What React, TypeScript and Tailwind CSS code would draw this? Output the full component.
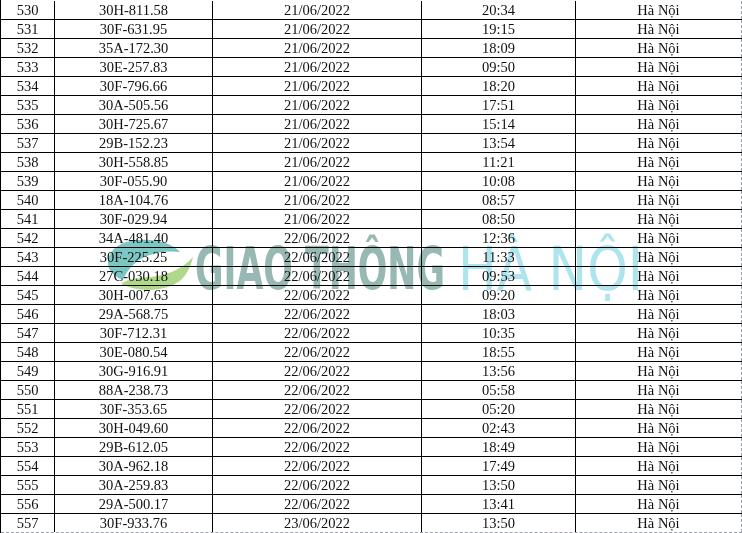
import React from "react";

const rows: [string, string, string, string][] = [
  ["530", "30H-811.58", "21/06/2022", "20:34"],
  ["531", "30F-631.95", "21/06/2022", "19:15"],
  ["532", "35A-172.30", "21/06/2022", "18:09"],
  ["533", "30E-257.83", "21/06/2022", "09:50"],
  ["534", "30F-796.66", "21/06/2022", "18:20"],
  ["535", "30A-505.56", "21/06/2022", "17:51"],
  ["536", "30H-725.67", "21/06/2022", "15:14"],
  ["537", "29B-152.23", "21/06/2022", "13:54"],
  ["538", "30H-558.85", "21/06/2022", "11:21"],
  ["539", "30F-055.90", "21/06/2022", "10:08"],
  ["540", "18A-104.76", "21/06/2022", "08:57"],
  ["541", "30F-029.94", "21/06/2022", "08:50"],
  ["542", "34A-481.40", "22/06/2022", "12:36"],
  ["543", "30F-225.25", "22/06/2022", "11:33"],
  ["544", "27C-030.18", "22/06/2022", "09:53"],
  ["545", "30H-007.63", "22/06/2022", "09:20"],
  ["546", "29A-568.75", "22/06/2022", "18:03"],
  ["547", "30F-712.31", "22/06/2022", "10:35"],
  ["548", "30E-080.54", "22/06/2022", "18:55"],
  ["549", "30G-916.91", "22/06/2022", "13:56"],
  ["550", "88A-238.73", "22/06/2022", "05:58"],
  ["551", "30F-353.65", "22/06/2022", "05:20"],
  ["552", "30H-049.60", "22/06/2022", "02:43"],
  ["553", "29B-612.05", "22/06/2022", "18:49"],
  ["554", "30A-962.18", "22/06/2022", "17:49"],
  ["555", "30A-259.83", "22/06/2022", "13:50"],
  ["556", "29A-500.17", "22/06/2022", "13:41"],
  ["557", "30F-933.76", "23/06/2022", "13:50"],
];

function Watermark() {
  return (
    <svg
      className="absolute left-0 top-0 pointer-events-none mix-blend-multiply"
      width="742"
      height="533"
      viewBox="0 0 742 533"
    >
      <path
        d="M108,263 C108,246 127,238 150,240 C165,241 176,247 180,252 C166,250 151,253 141,259 C131,265 126,273 123,280 C113,276 108,270 108,263 Z"
        fill="#7cc6c3"
      />
      <path
        d="M121,284 C140,293 166,292 181,280 C187,274 191,266 193,257 C183,268 169,275 151,277 C139,278 129,278 121,284 Z"
        fill="#b0d88a"
      />
      <text
        x="195"
        y="289"
        fontFamily="'DejaVu Sans', sans-serif"
        fontWeight="bold"
        fontSize="58"
        textLength="250"
        lengthAdjust="spacingAndGlyphs"
        fill="#98b9b3"
      >
        GIAO THÔNG
      </text>
      <text
        x="458"
        y="290"
        fontFamily="'DejaVu Sans', sans-serif"
        fontWeight="normal"
        fontSize="60"
        textLength="185"
        lengthAdjust="spacingAndGlyphs"
        fill="#ade4ee"
      >
        HÀ NỘI
      </text>
    </svg>
  );
}

export default function App() {
  return (
    <div
      className="relative w-[742px] h-[533px] bg-white overflow-hidden text-[14.5px] leading-none text-[#111]"
      style={{ fontFamily: "'Liberation Serif', 'Times New Roman', serif" }}
    >
      <div className="border-l border-black w-[742px] pt-px">
        {rows.map((r, i) => {
          const last = i === rows.length - 1;
          return (
            <div
              key={r[0]}
              className={
                last
                  ? "grid grid-cols-[54px_158px_209px_154px_166px] h-[19px] border-b border-dashed border-gray-400"
                  : "grid grid-cols-[54px_158px_209px_154px_166px] h-[19px] border-b border-black"
              }
            >
              <div className="flex items-center justify-center border-r border-black">{r[0]}</div>
              <div className="flex items-center justify-center border-r border-black">{r[1]}</div>
              <div className="flex items-center justify-center border-r border-black">{r[2]}</div>
              <div className="flex items-center justify-center border-r border-black">{r[3]}</div>
              <div className="flex items-center justify-center border-r border-dashed border-gray-400">Hà Nội</div>
            </div>
          );
        })}
      </div>
      <Watermark />
    </div>
  );
}
